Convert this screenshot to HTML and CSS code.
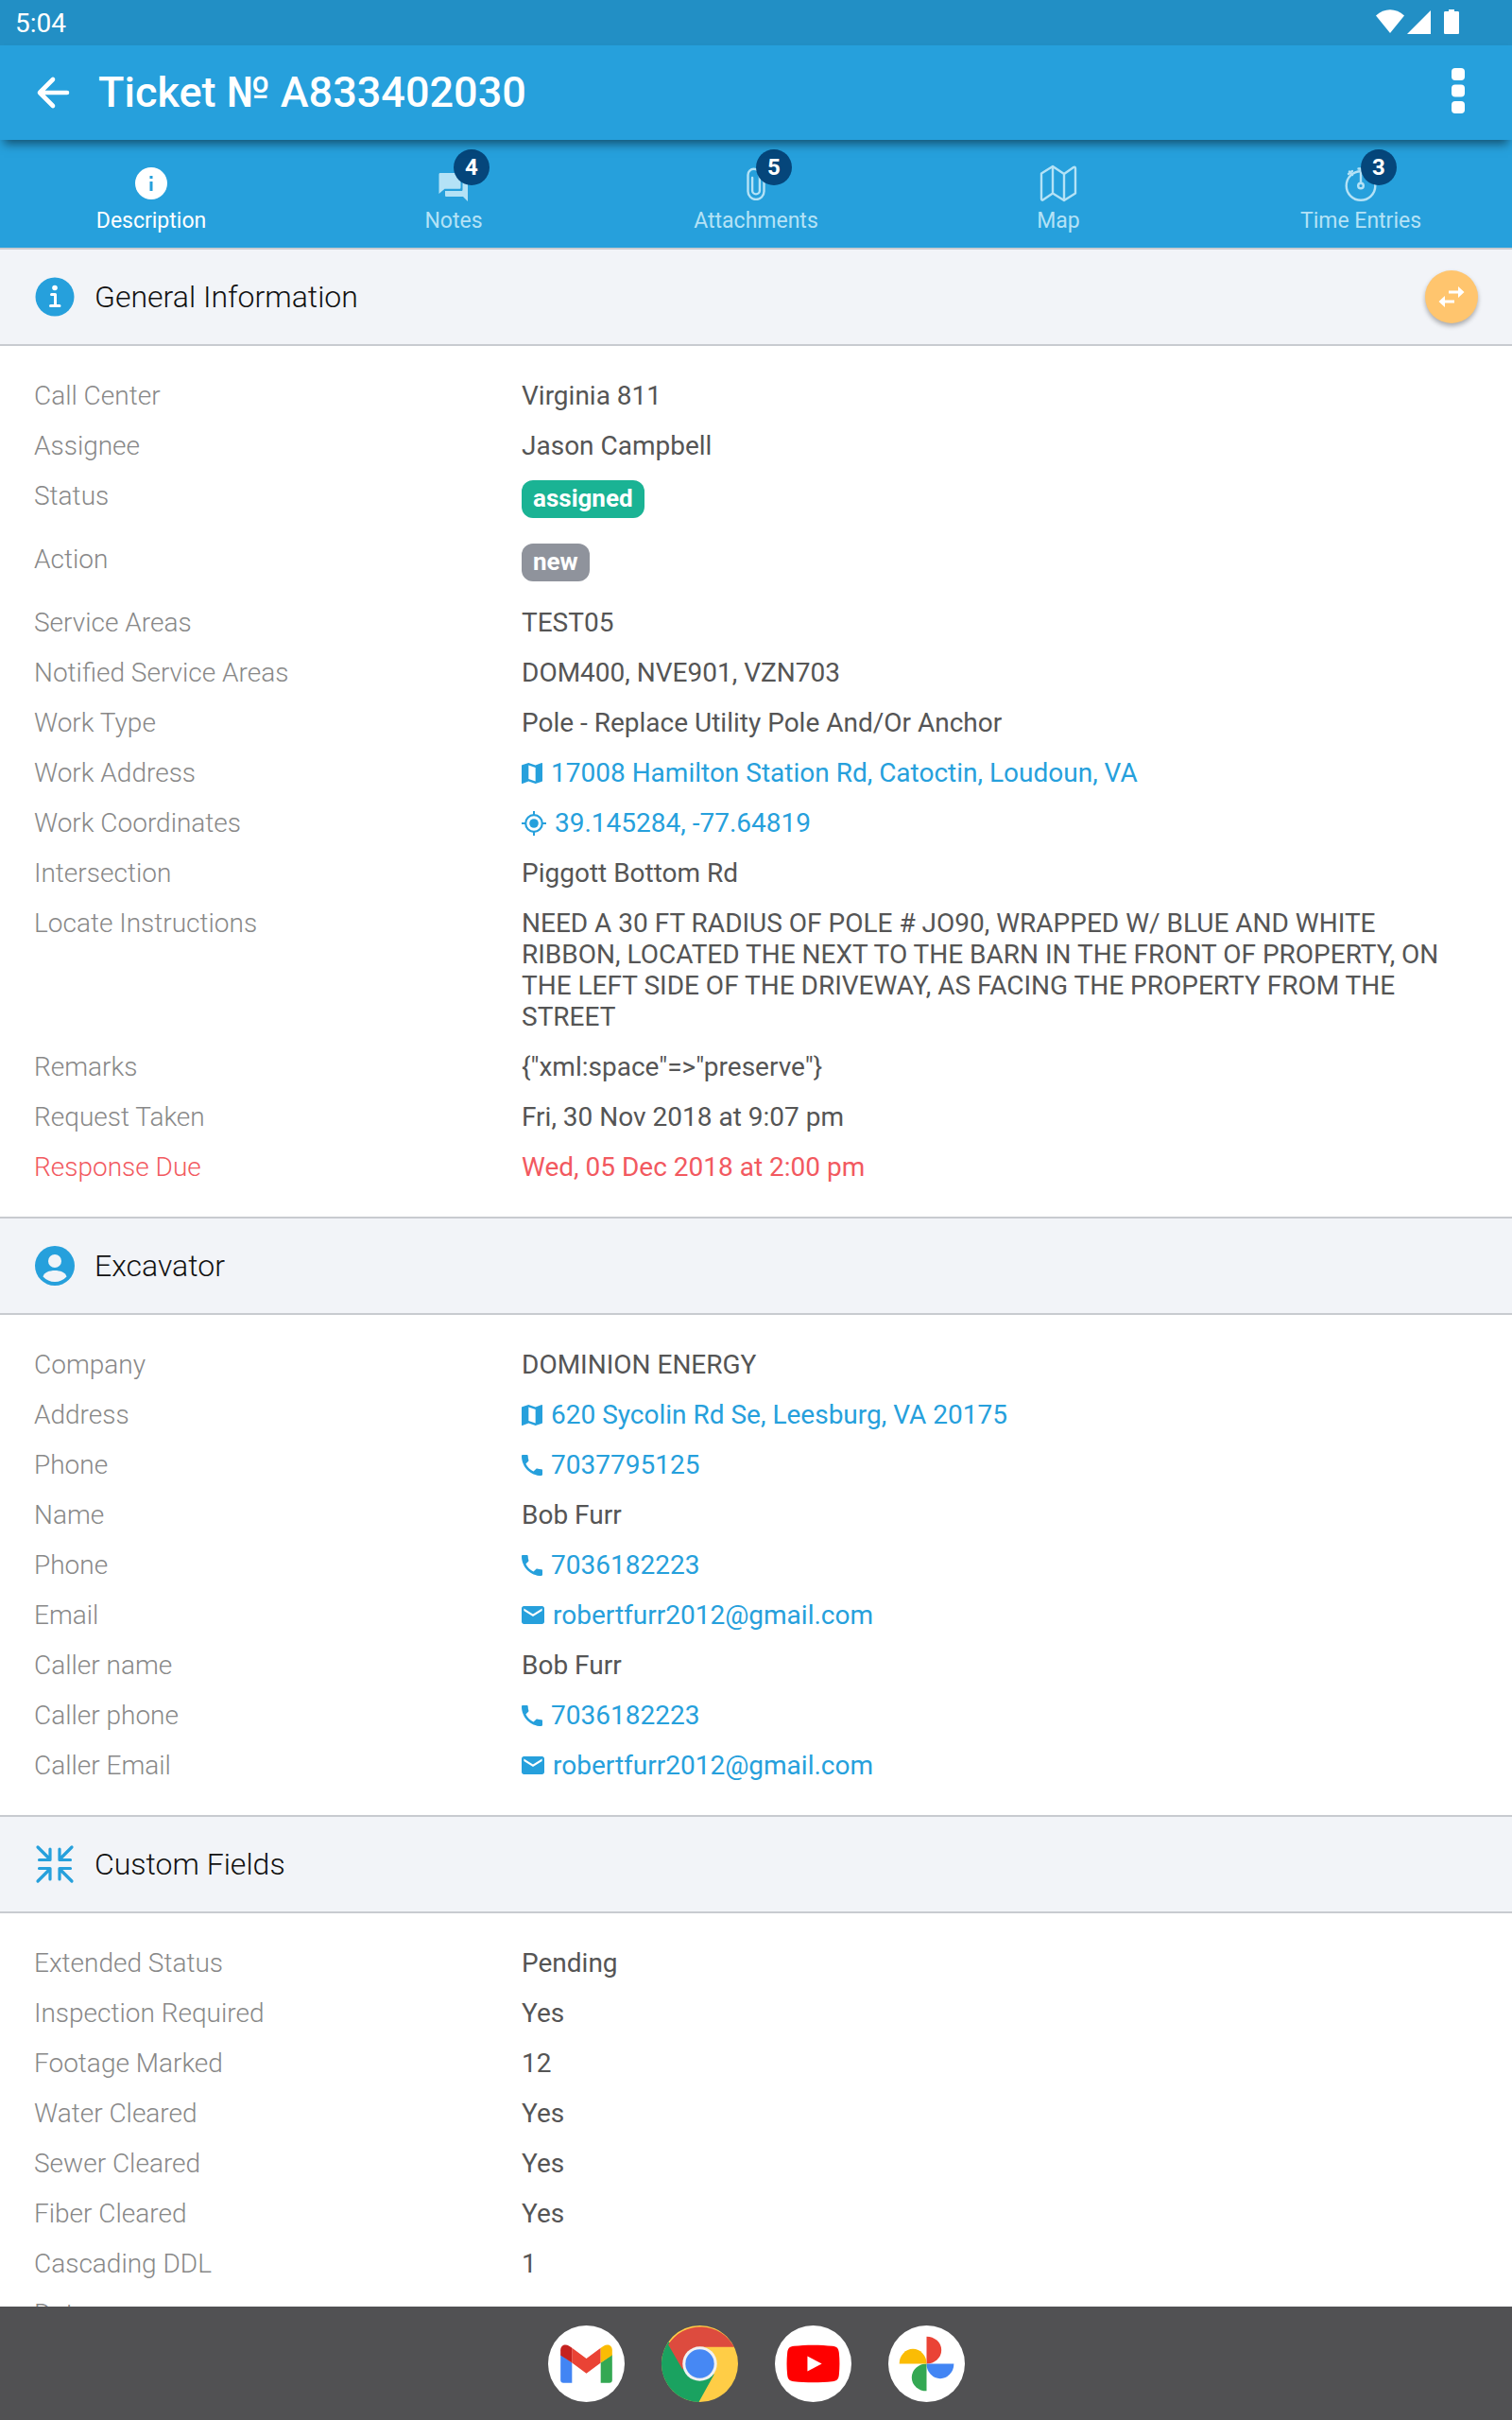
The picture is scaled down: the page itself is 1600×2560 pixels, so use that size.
FILE: index.html
```html
<!DOCTYPE html>
<html lang="en">
<head>
    <meta charset="UTF-8">
    <meta name="viewport" content="width=device-width, initial-scale=1.0">
    <title>Ticket № A833402030</title>
    <link rel="stylesheet" href="styles.css">
</head>
<body>
    <!-- shared icons -->
    <svg class="sprite" aria-hidden="true">
        <symbol id="icon-map" viewBox="3 3 18 18">
            <path d="M20.500 3l-.16.03L15 5.100 9 3 3.360 4.900c-.21.07-.36.25-.36.48V20.500c0 .28.22.5.5.5l.16-.03L9 18.900l6 2.100 5.640-1.900c.21-.07.36-.25.36-.48V3.500c0-.28-.22-.5-.5-.5zM15 19l-6-2.110V5l6 2.110V19z"/>
        </symbol>
        <symbol id="icon-phone" viewBox="0 0 22 22">
            <path d="M4.400 9.500c1.800 3.500 4.600 6.300 8.100 8.100l2.700-2.700c.3-.3.800-.4 1.200-.3 1.400.5 2.800.7 4.400.7.700 0 1.200.5 1.200 1.200v4.300c0 .700-.5 1.200-1.200 1.200C9.300 22 0 12.700 0 1.200 0 .5.5 0 1.200 0h4.300c.7 0 1.200.5 1.200 1.200 0 1.500.2 3 .7 4.400.1.400 0 .9-.3 1.200z"/>
        </symbol>
        <symbol id="icon-mail" viewBox="0 0 24 22">
            <path d="M2.400 1h19.200C22.900 1 24 2.100 24 3.400v14.200c0 1.300-1.100 2.400-2.400 2.400H2.400C1.100 20 0 18.900 0 17.600V3.400C0 2.100 1.100 1 2.400 1zm19.200 5V3.500L12 9.500l-9.600-6V6l9.600 6z"/>
        </symbol>
        <symbol id="icon-locate" viewBox="0 0 26 26">
            <circle cx="13" cy="13" r="4.800"/>
            <circle cx="13" cy="13" r="8.800" fill="none" stroke="currentColor" stroke-width="2.200"/>
            <path d="M12 0h2v4h-2zM12 22h2v4h-2zM0 12h4v2H0zM22 12h4v2h-4z"/>
        </symbol>
    </svg>

    <div class="status-bar">
        <span>5:04</span>
        <svg width="92" height="28" viewBox="0 0 92 28" fill="#fff">
            <path d="M0 6.500C9-1.800 21-1.800 30 6.500L15 25z"/>
            <path d="M58 1v25H33z"/>
            <path d="M77 0h6v2h3.500c1 0 1.500.5 1.500 1.500v21c0 1-.5 1.500-1.500 1.500h-13c-1 0-1.500-.5-1.500-1.500v-21c0-1 .5-1.500 1.500-1.500H77z"/>
        </svg>
    </div>

    <header class="toolbar">
        <button class="icon-button" aria-label="Back">
            <svg width="36" height="36" viewBox="0 0 36 36" fill="none" stroke="#fff" stroke-width="4.600" stroke-linecap="round" stroke-linejoin="round">
                <path d="M18 4 4 18l14 14M5 18h28"/>
            </svg>
        </button>
        <h1>Ticket № A833402030</h1>
        <button class="icon-button" aria-label="More">
            <svg width="14" height="52" viewBox="0 0 14 52" fill="#fff">
                <rect y="0" width="14" height="13" rx="4"/>
                <rect y="17.500" width="14" height="13" rx="4"/>
                <rect y="35" width="14" height="13" rx="4"/>
            </svg>
        </button>
    </header>

    <nav class="tabs">
        <button class="tab active">
            <span class="tab-icon">
                <svg width="34" height="34" viewBox="0 0 34 34"><circle cx="17" cy="17" r="17" fill="#fff"/><path d="M15.500 9h3v3h-3zM15.500 15h3v10h-3z" fill="#26a0dc"/></svg>
            </span>
            Description
        </button>
        <button class="tab">
            <span class="tab-icon">
                <svg width="32" height="38" viewBox="0 0 32 38" fill="currentColor"><path d="M2 8h20c1 0 1.500.5 1.500 1.500v13.800c0 1-.5 1.500-1.500 1.500H6.500L.5 30V9.500C.5 8.500 1 8 2 8z"/><path d="M25.500 14H29c1 0 2 .5 2 1.500V38l-5-5H8.500c-1 0-1.500-.5-1.500-1.500V27h17c1 0 1.500-.5 1.500-1.500z"/></svg>
                <span class="count">4</span>
            </span>
            Notes
        </button>
        <button class="tab">
            <span class="tab-icon">
                <svg width="22" height="36" viewBox="0 0 22 36" fill="none" stroke="currentColor" stroke-width="2.400" stroke-linecap="round"><path d="M19.500 12v14.500a8.500 8.500 0 0 1-17 0V9a6.200 6.200 0 0 1 12.400 0v16.500a3.900 3.900 0 0 1-7.800 0V12"/></svg>
                <span class="count">5</span>
            </span>
            Attachments
        </button>
        <button class="tab">
            <span class="tab-icon">
                <svg width="40" height="40" viewBox="0 0 40 40" fill="none" stroke="currentColor" stroke-width="2.400" stroke-linejoin="round"><path d="M2 9.500 14 2l12 8 10-7c1.200-.8 2-.3 2 1v26.500L26 38l-12-7.500-10 6.800c-1.200.8-2 .2-2-1zM14 2v28.500M26 10v28"/></svg>
            </span>
            Map
        </button>
        <button class="tab">
            <span class="tab-icon">
                <svg width="34" height="38" viewBox="0 0 34 38" fill="none" stroke="currentColor" stroke-width="2.400" stroke-linecap="round"><circle cx="17" cy="21.500" r="15.300"/><circle cx="17" cy="21.500" r="2.800"/><path d="M17 18V4M14.500 3.500h5M4 9l4-3M5 6.500l3 3.500"/></svg>
                <span class="count">3</span>
            </span>
            Time Entries
        </button>
    </nav>

    <main>
        <section>
            <div class="section-header">
                <svg width="44" height="44" viewBox="0 0 44 44">
                    <circle cx="22" cy="22" r="20.500" fill="#26a0dc"/>
                    <circle cx="22" cy="12.500" r="2.800" fill="#fff"/>
                    <path d="M18.500 19.500h4V31M17.500 31.500h9.500" fill="none" stroke="#fff" stroke-width="3" stroke-linecap="round" stroke-linejoin="round"/>
                </svg>
                <h2>General Information</h2>
                <button class="fab" aria-label="Change status">
                    <svg width="28" height="22" viewBox="0 0 28 22" fill="#fff"><path d="M11 4.500h10V0l6.500 6-6.500 6V7.500H11zM17 14.500H7V10L.5 16 7 22v-4.500h10z"/></svg>
                </button>
            </div>
            <dl>
                <div class="row"><dt>Call Center</dt><dd>Virginia 811</dd></div>
                <div class="row"><dt>Assignee</dt><dd>Jason Campbell</dd></div>
                <div class="row"><dt>Status</dt><dd class="has-label"><span class="label assigned">assigned</span></dd></div>
                <div class="row"><dt>Action</dt><dd class="has-label"><span class="label new">new</span></dd></div>
                <div class="row"><dt>Service Areas</dt><dd>TEST05</dd></div>
                <div class="row"><dt>Notified Service Areas</dt><dd>DOM400, NVE901, VZN703</dd></div>
                <div class="row"><dt>Work Type</dt><dd>Pole - Replace Utility Pole And/Or Anchor</dd></div>
                <div class="row"><dt>Work Address</dt><dd><a href="#"><svg class="icon" width="22" height="22"><use href="#icon-map"/></svg>17008 Hamilton Station Rd, Catoctin, Loudoun, VA</a></dd></div>
                <div class="row"><dt>Work Coordinates</dt><dd><a href="#"><svg class="icon" width="26" height="26"><use href="#icon-locate"/></svg>39.145284, -77.64819</a></dd></div>
                <div class="row"><dt>Intersection</dt><dd>Piggott Bottom Rd</dd></div>
                <div class="row"><dt>Locate Instructions</dt><dd>NEED A 30 FT RADIUS OF POLE # JO90, WRAPPED W/ BLUE AND WHITE RIBBON, LOCATED THE NEXT TO THE BARN IN THE FRONT OF PROPERTY, ON THE LEFT SIDE OF THE DRIVEWAY, AS FACING THE PROPERTY FROM THE STREET</dd></div>
                <div class="row"><dt>Remarks</dt><dd>{"xml:space"=&gt;"preserve"}</dd></div>
                <div class="row"><dt>Request Taken</dt><dd>Fri, 30 Nov 2018 at 9:07 pm</dd></div>
                <div class="row overdue"><dt>Response Due</dt><dd>Wed, 05 Dec 2018 at 2:00 pm</dd></div>
            </dl>
        </section>

        <section>
            <div class="section-header">
                <svg width="44" height="44" viewBox="0 0 44 44">
                    <circle cx="22" cy="22" r="21" fill="#26a0dc"/>
                    <circle cx="22" cy="17" r="7" fill="#f2f4f8"/>
                    <path d="M9.500 33.500c1-4.500 7-6.500 12.500-6.500s11.500 2 12.500 6.500A17.200 17.200 0 0 1 22 39a17.200 17.200 0 0 1-12.500-5.500z" fill="#f2f4f8"/>
                </svg>
                <h2>Excavator</h2>
            </div>
            <dl>
                <div class="row"><dt>Company</dt><dd>DOMINION ENERGY</dd></div>
                <div class="row"><dt>Address</dt><dd><a href="#"><svg class="icon" width="22" height="22"><use href="#icon-map"/></svg>620 Sycolin Rd Se, Leesburg, VA 20175</a></dd></div>
                <div class="row"><dt>Phone</dt><dd><a href="tel:7037795125"><svg class="icon" width="22" height="22"><use href="#icon-phone"/></svg>7037795125</a></dd></div>
                <div class="row"><dt>Name</dt><dd>Bob Furr</dd></div>
                <div class="row"><dt>Phone</dt><dd><a href="tel:7036182223"><svg class="icon" width="22" height="22"><use href="#icon-phone"/></svg>7036182223</a></dd></div>
                <div class="row"><dt>Email</dt><dd><a href="mailto:robertfurr2012@gmail.com"><svg class="icon" width="24" height="22"><use href="#icon-mail"/></svg>robertfurr2012@gmail.com</a></dd></div>
                <div class="row"><dt>Caller name</dt><dd>Bob Furr</dd></div>
                <div class="row"><dt>Caller phone</dt><dd><a href="tel:7036182223"><svg class="icon" width="22" height="22"><use href="#icon-phone"/></svg>7036182223</a></dd></div>
                <div class="row"><dt>Caller Email</dt><dd><a href="mailto:robertfurr2012@gmail.com"><svg class="icon" width="24" height="22"><use href="#icon-mail"/></svg>robertfurr2012@gmail.com</a></dd></div>
            </dl>
        </section>

        <section>
            <div class="section-header">
                <svg width="44" height="44" viewBox="0 0 44 44" fill="none" stroke="#26a0dc" stroke-width="3.200" stroke-linecap="round" stroke-linejoin="round">
                    <path d="M4 4l13 13M17 6v11.500H5.500M40 4 27 17M27 6v11.500h11.500M4 40l13-13M17 38V26.500H5.500M40 40 27 27M27 38V26.500h11.500"/>
                </svg>
                <h2>Custom Fields</h2>
            </div>
            <dl>
                <div class="row"><dt>Extended Status</dt><dd>Pending</dd></div>
                <div class="row"><dt>Inspection Required</dt><dd>Yes</dd></div>
                <div class="row"><dt>Footage Marked</dt><dd>12</dd></div>
                <div class="row"><dt>Water Cleared</dt><dd>Yes</dd></div>
                <div class="row"><dt>Sewer Cleared</dt><dd>Yes</dd></div>
                <div class="row"><dt>Fiber Cleared</dt><dd>Yes</dd></div>
                <div class="row"><dt>Cascading DDL</dt><dd>1</dd></div>
                <div class="row"><dt>Date</dt><dd></dd></div>
            </dl>
        </section>
    </main>

    <footer class="dock">
        <button aria-label="Gmail">
            <svg viewBox="0 0 80 80">
                <circle cx="40" cy="40" r="40" fill="#fff"/>
                <path d="M13 30l12 9v21h-9c-2 0-3-1-3-3z" fill="#4285f4"/>
                <path d="M67 30l-12 9v21h9c2 0 3-1 3-3z" fill="#34a853"/>
                <path d="M25 23.500 40 34.500l15-11V39L40 50 25 39z" fill="#ea4335"/>
                <path d="M13 31v-5c0-5.500 5-7 9-4.500l3 2V39z" fill="#c5221f"/>
                <path d="M67 31v-5c0-5.500-5-7-9-4.500l-3 2V39z" fill="#fbbc04"/>
            </svg>
        </button>
        <button aria-label="Chrome">
            <svg viewBox="0 0 80 80">
                <circle cx="40" cy="40" r="40" fill="#ffcd46"/>
                <path d="M40 40 7.300 17A40 40 0 0 0 39 80l16-29z" fill="#1aa260"/>
                <path d="M7 20A40 40 0 0 1 76 22.500H40L22 46z" fill="#dd4b3e"/>
                <circle cx="40" cy="40" r="18" fill="#f1f1f1"/>
                <circle cx="40" cy="40" r="15" fill="#4688f4"/>
            </svg>
        </button>
        <button aria-label="YouTube">
            <svg viewBox="0 0 80 80">
                <circle cx="40" cy="40" r="40" fill="#fff"/>
                <path d="M20 21.500c12-1.500 28-1.500 40 0 5 .6 6.500 2.500 7 7 .8 8 .8 15 0 23-.5 4.500-2 6.400-7 7-12 1.500-28 1.500-40 0-5-.6-6.500-2.500-7-7-.8-8-.8-15 0-23 .5-4.500 2-6.400 7-7z" fill="#f00"/>
                <path d="M34 32l15 8-15 8z" fill="#fff"/>
            </svg>
        </button>
        <button aria-label="Photos">
            <svg viewBox="0 0 80 80">
                <circle cx="40" cy="40" r="40" fill="#fff"/>
                <path d="M40 11.500A15.500 14.250 0 0 1 40 40z" fill="#ea4335"/>
                <path d="M68.500 40A14.250 15.500 0 0 1 40 40z" fill="#4285f4"/>
                <path d="M40 68.500A15.500 14.250 0 0 1 40 40z" fill="#34a853"/>
                <path d="M11.500 40A14.250 15.500 0 0 1 40 40z" fill="#fbbc04"/>
            </svg>
        </button>
    </footer>
</body>
</html>
```

FILE: styles.css
```css
* {
    box-sizing: border-box;
}

body {
    display: flex;
    flex-direction: column;
    height: 100vh;
    margin: 0;
    font-family: Roboto, sans-serif;
    font-size: 28px;
    line-height: 33px;
    color: #555;
    background-color: #fff;
}

button {
    padding: 0;
    border: none;
    background: none;
    color: inherit;
    font: inherit;
}

svg {
    display: block;
}

.sprite {
    display: none;
}

.status-bar {
    display: flex;
    flex: none;
    justify-content: space-between;
    align-items: center;
    height: 48px;
    padding: 0 52px 0 16px;
    background: #228fc5;
    color: #fff;
}

.toolbar {
    position: relative;
    z-index: 1;
    display: flex;
    flex: none;
    align-items: center;
    gap: 30px;
    height: 100px;
    padding: 0 50px 0 38px;
    background: #26a0dc;
    color: #fff;
    box-shadow: 0 8px 10px -4px rgba(0, 0, 0, 0.5);
}

.toolbar h1 {
    flex: 1;
    margin: 0;
    font-size: 45px;
    font-weight: 500;
    line-height: 52px;
}

/* Tabs */
.tabs {
    display: flex;
    flex: none;
    height: 114px;
    background: #26a0dc;
}

.tab {
    display: flex;
    flex: 1;
    flex-direction: column;
    align-items: center;
    padding-top: 26px;
    color: #b4e2f6;
    font-size: 23px;
    line-height: 28px;
}

.tab.active {
    color: #fff;
}

.tab-icon {
    position: relative;
    display: flex;
    justify-content: center;
    align-items: center;
    width: 40px;
    height: 40px;
    margin-bottom: 6px;
}

.count {
    position: absolute;
    top: -16px;
    left: 20px;
    width: 38px;
    border-radius: 50%;
    background: #05467b;
    color: #fff;
    font-size: 24px;
    font-weight: 700;
    line-height: 38px;
    text-align: center;
}

/* Ticket details */
main {
    flex: 1;
    min-height: 0;
    overflow: hidden;
}

.section-header {
    display: flex;
    align-items: center;
    gap: 20px;
    height: 104px;
    padding: 0 36px;
    border-top: 2px solid #c8cbd0;
    border-bottom: 2px solid #c8cbd0;
    background: #f2f4f8;
}

.section-header h2 {
    flex: 1;
    margin: 0;
    color: #111;
    font-size: 32px;
    font-weight: 300;
    line-height: 38px;
}

.fab {
    display: flex;
    justify-content: center;
    align-items: center;
    width: 56px;
    height: 56px;
    border-radius: 50%;
    background: #ffc56e;
    box-shadow: 0 3px 5px rgba(0, 0, 0, 0.3);
}

dl {
    margin: 0;
    padding: 26px 36px;
}

.row {
    display: grid;
    grid-template-columns: 1fr 2fr;
    gap: 10px;
    padding: 10px 0;
}

dt {
    color: #888;
    font-weight: 300;
}

dd {
    margin: 0;
}

.has-label {
    padding-bottom: 7px;
}

.label {
    display: block;
    width: fit-content;
    padding: 0 12px 2px;
    border-radius: 12px;
    color: #fff;
    font-size: 26px;
    font-weight: 700;
    line-height: 38px;
}

.label.assigned {
    background: #1ab394;
}

.label.new {
    background: #8f939c;
}

.overdue dt,
.overdue dd {
    color: #f25960;
}

a {
    display: flex;
    align-items: center;
    gap: 9px;
    width: fit-content;
    height: 33px;
    color: #26a0dc;
    text-decoration: none;
}

.icon {
    fill: currentColor;
}

/* Bottom app dock */
.dock {
    display: flex;
    flex: none;
    justify-content: center;
    align-items: center;
    gap: 39px;
    height: 120px;
    background: #515153;
}

.dock button {
    width: 81px;
    height: 81px;
}
```
